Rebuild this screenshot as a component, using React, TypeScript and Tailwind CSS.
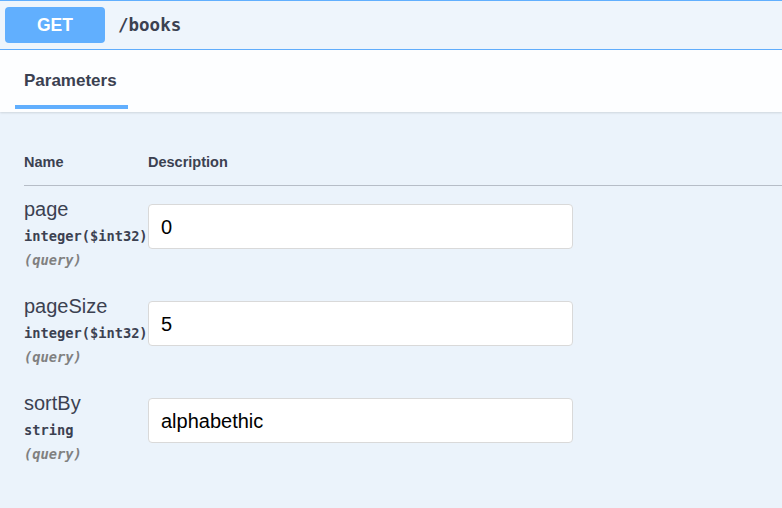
const params = [
  { name: "page", type: "integer($int32)", value: "0" },
  { name: "pageSize", type: "integer($int32)", value: "5" },
  { name: "sortBy", type: "string", value: "alphabethic" },
];

const mono = "font-['DejaVu_Sans_Mono',monospace]";

export default function App() {
  return (
    <div className="h-[508px] w-[782px] overflow-hidden bg-[#ebf3fb] font-['Liberation_Sans',Arial,sans-serif] text-[#3b4151]">
      {/* Summary bar */}
      <div className="flex h-[50px] items-center border-y border-[#61affe] bg-[#eef5fc] pl-[5px]">
        <div className="flex h-9 w-[100px] items-center justify-center rounded bg-[#61affe] text-[17.5px] font-bold text-white">
          GET
        </div>
        <span className={`ml-[13px] text-[17.5px] font-bold ${mono}`}>/books</span>
      </div>

      {/* Tab header */}
      <div className="relative h-[62px] bg-white/90 pl-[15px] pt-[21px] shadow-[0_1px_2px_rgba(0,0,0,0.12)]">
        <div className="flex w-[113px] flex-col">
          <span className="pl-[9px] text-[17px] font-bold leading-5">Parameters</span>
          <div className="mt-[14px] h-1 bg-[#61affe]" />
        </div>
      </div>

      {/* Table */}
      <div className="pl-6 pt-[41px]">
        <div className="flex border-b border-[#3b4151]/30 pb-[14px] text-[14.5px] font-bold leading-[18px]">
          <span className="w-[124px]">Name</span>
          <span>Description</span>
        </div>

        {params.map((p) => (
          <div key={p.name} className="flex pb-[14px] pt-[11px]">
            <div className="flex w-[124px] flex-col">
              <span className="text-[20px] leading-6">{p.name}</span>
              <span className={`mt-[6px] whitespace-nowrap text-[13.7px] font-bold leading-[18px] ${mono}`}>{p.type}</span>
              <span className={`mt-[6px] text-[13.7px] font-bold italic leading-[18px] text-[#808080] ${mono}`}>(query)</span>
            </div>
            <div className="mt-[7px] flex h-[45px] w-[425px] items-center rounded border border-[#d9d9d9] bg-white pl-3 text-[20px] text-black">
              {p.value}
            </div>
          </div>
        ))}
      </div>
    </div>
  );
}
